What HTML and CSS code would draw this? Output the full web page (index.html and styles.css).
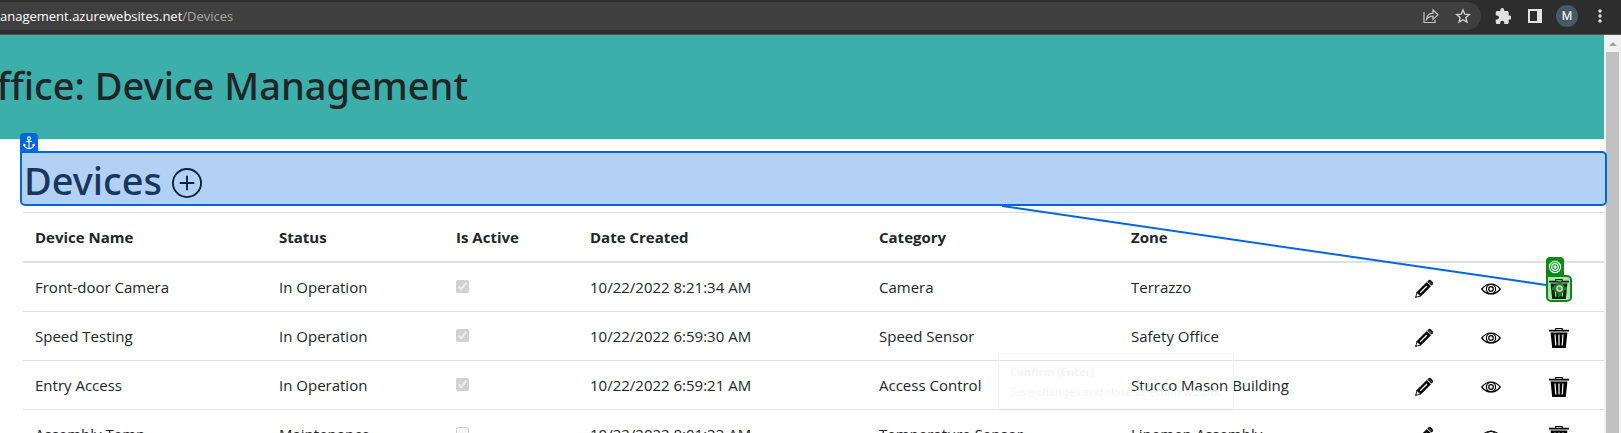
FILE: index.html
```
<!DOCTYPE html>
<html lang="en">
<head>
<meta charset="utf-8">
<title>Device Management</title>
<link rel="stylesheet" href="styles.css">
</head>
<body>
<svg class="sprite" aria-hidden="true">
  <symbol id="pencil" viewBox="0 0 20 20">
    <path d="M1.2 18.8 2.6 13.2 12.8 3 17 7.200 6.800 17.400Z" fill="#000"/>
    <path d="M2.200 17.800 3.300 14.200 5.900 16.700Z" fill="#fff"/>
    <path d="M1.300 18.700 1.800 16.900 3.100 18.200Z" fill="#000"/>
    <path d="M6.200 13.800 13 7" stroke="#fff" stroke-width="1.300"/>
    <path d="M13.300 2.500 14.800 1Q15.900.4 17 1.500L18.500 3Q19.500 4.100 18.700 5.200L17.400 6.600Z" fill="#000"/>
    <path d="M12.700 2.800 17.200 7.200M15 2.500 17.400 4.900" stroke="#bbb" stroke-width=".8"/>
  </symbol>
  <symbol id="eye" viewBox="0 0 20 20">
    <g fill="none" stroke="#000" stroke-width="1.200">
      <path d="M.7 10Q4.800 5 10 5T19.300 10Q15.200 15 10 15T.7 10Z"/>
      <circle cx="10" cy="10" r="4.600"/>
      <circle cx="10" cy="10" r="2.300"/>
    </g>
  </symbol>
  <symbol id="trash" viewBox="0 0 20 20">
    <path d="M6.700 2V1Q6.700.5 7.300.5H12.700Q13.300.5 13.300 1V2" fill="none" stroke="#000" stroke-width="1.200"/>
    <path d="M0 1.800H20V3.400H0ZM1.600 4.400H18.400L16.800 20H3.200Z" fill="#000"/>
    <path d="M6 6.500 6.800 17.500M10 6.500V17.500M14 6.500 13.200 17.500" stroke="#fff" stroke-width="1.200"/>
  </symbol>
</svg>

<div class="browser">
  <header class="toolbar">
    <div class="address">
      <div class="url"><span class="url-host">anagement.azurewebsites.net</span><span class="url-path">/Devices</span></div>
      <button class="tool" aria-label="Share"><svg width="16" height="16" viewBox="0 0 16 16" fill="none" stroke="#c4c4c4" stroke-width="1.200"><path d="M1 4V14.500H12V12"/><path d="M3.500 11.500Q4 5.500 10 5.200V2L15 6.800 10 11.400V8.200Q6 8 3.500 11.500Z"/></svg></button>
      <button class="tool" aria-label="Bookmark"><svg width="16" height="16" viewBox="0 0 16 16" fill="none" stroke="#d0d0d0" stroke-width="1.400"><path d="M8 2 9.800 6.200 14.300 6.600 10.900 9.600 11.900 14 8 11.700 4.100 14 5.100 9.600 1.700 6.600 6.200 6.200Z"/></svg></button>
    </div>
    <nav class="tools">
      <button class="tool" aria-label="Extensions"><svg width="16" height="16" viewBox="1 1 21 21" fill="#e0e0e0"><path d="M20.500 11H19V7c0-1.100-.9-2-2-2h-4V3.500a2.500 2.500 0 0 0-5 0V5H4c-1.100 0-2 .9-2 2v3.800h1.500a2.700 2.700 0 0 1 0 5.400H2V20c0 1.100.9 2 2 2h3.800v-1.500a2.700 2.700 0 0 1 5.400 0V22H17c1.100 0 2-.9 2-2v-4h1.500a2.500 2.500 0 0 0 0-5z"/></svg></button>
      <button class="tool" aria-label="Side panel"><svg width="14" height="14" viewBox="0 0 14 14"><path d="M0 0H14V14H0ZM2 2V12H9V2Z" fill="#e4e4e4" fill-rule="evenodd"/></svg></button>
      <button class="avatar" aria-label="Profile M">M</button>
      <button class="tool" aria-label="Menu"><svg width="4" height="14" viewBox="0 0 4 14" fill="#e4e4e4"><circle cx="2" cy="2" r="1.700"/><circle cx="2" cy="7" r="1.700"/><circle cx="2" cy="12" r="1.700"/></svg></button>
    </nav>
  </header>

  <div class="viewport">
    <div class="page">
      <div class="banner"><h1 class="banner-title">ffice: Device Management</h1></div>
      <main class="content">
        <div class="heading">
          <span class="tag anchor-tag"><svg width="12" height="14" viewBox="0 0 12 14" fill="none" stroke="#fff" stroke-width="1.100"><circle cx="6" cy="2.400" r="1.500"/><path d="M6 4V12.500M3 5.500H9M1 8.500Q1.500 12.300 6 12.600 10.500 12.300 11 8.500M.5 10 1 8.300 2.700 9.200M11.500 10 11 8.300 9.300 9.200"/></svg></span>
          <h2 class="heading-title">Devices</h2>
          <button class="add" aria-label="Add device"><svg width="30" height="30" viewBox="0 0 16 16" fill="none" stroke="#06203f"><circle cx="8" cy="8" r="7.500"/><path d="M8 4.500V11.500M4.500 8H11.500" stroke-linecap="round"/></svg></button>
        </div>
        <table class="devices">
          <colgroup><col class="c-name"><col class="c-status"><col class="c-active"><col class="c-date"><col class="c-category"><col class="c-zone"><col class="c-action"><col class="c-view"><col class="c-action"></colgroup>
          <thead>
            <tr><th>Device Name</th><th>Status</th><th>Is Active</th><th>Date Created</th><th>Category</th><th>Zone</th><th></th><th></th><th></th></tr>
          </thead>
          <tbody>
            <tr><td>Front-door Camera</td><td>In Operation</td><td><input class="check" type="checkbox" aria-label="Front-door Camera active" checked disabled></td><td>10/22/2022 8:21:34 AM</td><td>Camera</td><td>Terrazzo</td>
              <td><button class="action" aria-label="Edit"><svg class="icon"><use href="#pencil"/></svg></button></td><td><button class="action" aria-label="View"><svg class="icon"><use href="#eye"/></svg></button></td>
              <td><button class="action" aria-label="Delete"><svg class="icon"><use href="#trash"/></svg>
                <span class="target"><span class="tag target-tag"><svg width="14" height="14" viewBox="0 0 14 14" fill="none" stroke="#fff" stroke-width="1.200"><circle cx="7" cy="7" r="5.600"/><circle cx="7" cy="7" r="3.300"/><circle cx="7" cy="7" r="1.100"/></svg></span><svg class="target-mark" width="15" height="15" viewBox="0 0 15 15"><path d="M7.500 0V15M0 7.500H15" stroke="#0c8a12" stroke-width="3"/><circle cx="7.500" cy="7.500" r="4.300" fill="#999" stroke="#0c8a12" stroke-width="2"/><circle cx="7.500" cy="7.500" r="2.500" fill="#777" stroke="#ccc" stroke-width="1.500"/></svg></span></button></td></tr>
            <tr><td>Speed Testing</td><td>In Operation</td><td><input class="check" type="checkbox" aria-label="Speed Testing active" checked disabled></td><td>10/22/2022 6:59:30 AM</td><td>Speed Sensor</td><td>Safety Office</td>
              <td><button class="action" aria-label="Edit"><svg class="icon"><use href="#pencil"/></svg></button></td><td><button class="action" aria-label="View"><svg class="icon"><use href="#eye"/></svg></button></td><td><button class="action" aria-label="Delete"><svg class="icon"><use href="#trash"/></svg></button></td></tr>
            <tr><td>Entry Access</td><td>In Operation</td><td><input class="check" type="checkbox" aria-label="Entry Access active" checked disabled></td><td>10/22/2022 6:59:21 AM</td><td>Access Control</td><td>Stucco Mason Building</td>
              <td><button class="action" aria-label="Edit"><svg class="icon"><use href="#pencil"/></svg></button></td><td><button class="action" aria-label="View"><svg class="icon"><use href="#eye"/></svg></button></td><td><button class="action" aria-label="Delete"><svg class="icon"><use href="#trash"/></svg></button></td></tr>
            <tr><td>Assembly Temp</td><td>Maintenance</td><td><input class="check" type="checkbox" aria-label="Assembly Temp active" disabled></td><td>10/22/2022 8:01:23 AM</td><td>Temperature Sensor</td><td>Linemen Assembly</td>
              <td><button class="action" aria-label="Edit"><svg class="icon"><use href="#pencil"/></svg></button></td><td><button class="action" aria-label="View"><svg class="icon"><use href="#eye"/></svg></button></td><td><button class="action" aria-label="Delete"><svg class="icon"><use href="#trash"/></svg></button></td></tr>
          </tbody>
        </table>
      </main>
      <svg class="connector" width="546" height="82" viewBox="0 0 546 82" aria-hidden="true"><path d="M1 1 545 80" stroke="#0067df" stroke-width="2"/></svg>
      <div class="tooltip" role="tooltip"><strong>Confirm (Enter)</strong><span>Save changes and close selection wizard.</span></div>
    </div>
    <div class="scrollbar"><span class="scroll-up"></span><span class="thumb"></span></div>
  </div>
</div>
</body>
</html>
```
FILE: styles.css
```
* { box-sizing: border-box; }
body { margin: 0; font-family: "Open Sans", "Noto Sans", sans-serif; font-size: 15px; line-height: 24px; color: #212529; background: #fff; }
h1, h2 { margin: 0; font-family: "Noto Sans", "Open Sans", sans-serif; font-weight: 500; font-size: 38px; line-height: 48px; white-space: nowrap; }
button { padding: 0; border: 0; background: none; font: inherit; color: inherit; }
svg { display: block; }
.sprite { position: absolute; width: 0; height: 0; }

.browser { display: flex; flex-direction: column; height: 100vh; overflow: hidden; }

.toolbar { display: flex; flex: none; align-items: center; padding: 2px 19px 4px 0; background: #2d2d2d; border-bottom: 1px solid #555; }
.address { display: flex; flex: 1; align-items: center; gap: 16px; height: 28px; padding-right: 10px; background: #3f3f3f; border-radius: 0 14px 14px 0; }
.url { display: flex; flex: 1; font-size: 13px; }
.url-host { color: #fff; }
.url-path { color: #a8a8a8; }
.tools { display: flex; align-items: center; gap: 17px; margin-left: 14px; }
.avatar { width: 22px; height: 22px; margin: 0 3px 0 -3px; border-radius: 50%; background: #455a66; color: #fff; font: 12px/22px Roboto, sans-serif; text-align: center; }

.viewport { display: flex; flex: 1; min-height: 0; }
.page { position: relative; flex: 1; min-width: 0; }
.banner { display: flex; padding: 26px 0 30px; background: #3cafaa; }
.banner-title { display: flex; justify-content: flex-end; width: 468px; }
.content { padding: 12px 0 0 23px; }

.heading { position: relative; z-index: 1; display: flex; align-items: center; gap: 10px; height: 55px; margin: 0 -3px 6px -3px; padding: 3px 2px 0; border: 2px solid #0067df; border-radius: 0 5px 5px 5px; background: #b3d1f5; color: #17375f; }
.add { margin-top: 6px; }
.tag { position: absolute; display: flex; align-items: center; justify-content: center; width: 18px; height: 20px; border-radius: 4px 4px 0 0; }
.anchor-tag { left: -2px; top: -20px; background: #0067df; }

.devices { width: 100%; table-layout: fixed; border-collapse: collapse; }
.c-name { width: 244px; }
.c-status { width: 177px; }
.c-active { width: 134px; }
.c-date { width: 289px; }
.c-category { width: 252px; }
.c-zone { width: 283px; }
.c-action { width: 67px; }
.c-view { width: 68px; }
.devices th, .devices td { padding: 12px; border-top: 1px solid #dee2e6; text-align: left; vertical-align: top; white-space: nowrap; }
.devices th { font-weight: 700; border-bottom: 2px solid #dee2e6; }
.check { width: 13px; height: 13px; margin: 0; vertical-align: baseline; }
.action { position: relative; display: flex; align-items: flex-end; height: 24px; }
.icon { width: 20px; height: 20px; }

.target { position: absolute; left: -3px; bottom: -3px; display: flex; align-items: center; justify-content: center; width: 26px; height: 27px; border: 2px solid #078c12; border-radius: 0 5px 5px 5px; background: rgba(7, 140, 18, 0.3); }
.target-tag { left: -2px; top: -20px; background: #078c12; }

.connector { position: absolute; left: 1001px; top: 170px; z-index: 2; }
.tooltip { position: absolute; left: 998px; top: 318px; display: flex; flex-direction: column; padding: 8px 13px 8px 11px; border: 1px solid #f5f5f5; color: #f4f4f4; font-family: "Noto Sans", sans-serif; font-size: 11px; line-height: 20px; white-space: nowrap; }

.scrollbar { display: flex; flex-direction: column; align-items: center; width: 17px; background: #f1f1f1; }
.scroll-up { margin: 7px 0 6px; border: 4px solid transparent; border-top: 0; border-bottom-color: #a3a3a3; }
.thumb { flex: 1; width: 13px; background: #c1c1c1; }
```
